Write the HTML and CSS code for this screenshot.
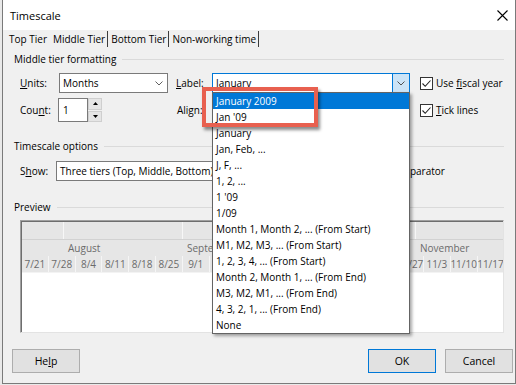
FILE: index.html
```html
<!DOCTYPE html>
<html>
<head>
<meta charset="utf-8">
<link rel="stylesheet" href="styles.css">
</head>
<body>
<div class="dialog">
  <div class="titlebar">
    <span class="title">Timescale</span>
    <svg class="close" width="11" height="11" viewBox="0 0 11 11"><path d="M0.5 0.5 L10.5 10.5 M10.5 0.5 L0.5 10.5" stroke="#000" stroke-width="1.1" fill="none"/></svg>
  </div>
  <div class="tabs">
    <div class="tab first">Top Tier</div>
    <div class="tab active">Middle Tier</div>
    <div class="tab">Bottom Tier</div>
    <div class="tab">Non-working time</div>
  </div>
  <div class="content">
    <div class="group-head"><span>Middle tier formatting</span><i class="rule"></i></div>
    <div class="row r1">
      <span class="lbl w-units"><u>U</u>nits:</span>
      <div class="combo units"><span>Months</span><svg class="chev" width="8" height="5" viewBox="0 0 8 5"><path d="M0.5 0.5 L4 4 L7.5 0.5" stroke="#606060" fill="none"/></svg></div>
      <span class="lbl w-label"><u>L</u>abel:</span>
      <div class="combo wide focus"><span>January</span><div class="dd-btn"><svg width="8" height="5" viewBox="0 0 8 5"><path d="M0.5 0.5 L4 4 L7.5 0.5" stroke="#505050" fill="none"/></svg></div></div>
      <div class="check"><span class="box"><svg width="11" height="11" viewBox="0 0 11 11"><path d="M1.5 5.5 L4.2 8.3 L9.5 2.5" stroke="#222" stroke-width="1.1" fill="none"/></svg></span><span>Use <u>f</u>iscal year</span></div>
    </div>
    <div class="row r2">
      <span class="lbl w-count">Cou<u>n</u>t:</span>
      <div class="spin-input">1</div>
      <div class="spin-btns">
        <div class="sb"><svg width="5" height="3" viewBox="0 0 5 3"><path d="M0 3 L2.5 0 L5 3 Z" fill="#000"/></svg></div>
        <div class="sb"><svg width="5" height="3" viewBox="0 0 5 3"><path d="M0 0 L2.5 3 L5 0 Z" fill="#000"/></svg></div>
      </div>
      <span class="lbl w-align">Align:</span>
      <div class="combo wide"></div>
      <div class="check"><span class="box"><svg width="11" height="11" viewBox="0 0 11 11"><path d="M1.5 5.5 L4.2 8.3 L9.5 2.5" stroke="#222" stroke-width="1.1" fill="none"/></svg></span><span><u>T</u>ick lines</span></div>
    </div>
    <div class="group-head gh2"><span>Timescale options</span><i class="rule"></i></div>
    <div class="row r3">
      <span class="lbl w-show">S<u>h</u>ow:</span>
      <div class="combo show"><span>Three tiers (Top, Middle, Bottom)</span></div>
      <span class="lbl size-lbl"></span>
      <div class="num"></div>
      <span class="pct"></span>
      <div class="check sep"><span class="box"><svg width="11" height="11" viewBox="0 0 11 11"><path d="M1.5 5.5 L4.2 8.3 L9.5 2.5" stroke="#222" stroke-width="1.1" fill="none"/></svg></span><span>Scale separator</span></div>
    </div>
    <div class="group-head gh3"><span>Preview</span><i class="rule"></i></div>
    <div class="preview">
      <div class="pv-inner">
        <div class="pv-row top">
          <div class="seg" style="width:41px"></div>
          <div class="seg" style="width:119px"></div>
          <div class="seg" style="width:115px"></div>
          <div class="seg" style="width:118px"></div>
          <div class="seg" style="width:87px"></div>
        </div>
        <div class="pv-row mid">
          <div class="seg" style="width:41px"></div>
          <div class="seg" style="width:119px">August</div>
          <div class="seg" style="width:115px">September</div>
          <div class="seg" style="width:118px"></div>
          <div class="seg" style="width:87px">November</div>
        </div>
        <div class="pv-row dates">
          <div class="cell">7/21</div><div class="cell">7/28</div><div class="cell">8/4</div><div class="cell">8/11</div><div class="cell">8/18</div><div class="cell">8/25</div><div class="cell">9/1</div><div class="cell"></div><div class="cell"></div><div class="cell"></div><div class="cell"></div><div class="cell"></div><div class="cell"></div><div class="cell"></div><div class="cell">10/27</div><div class="cell">11/3</div><div class="cell">11/10</div><div class="cell">11/17</div>
        </div>
      </div>
    </div>
    <div class="buttons">
      <div class="btn">He<u>l</u>p</div>
      <div class="spacer"></div>
      <div class="btn default">OK</div>
      <div class="btn">Cancel</div>
    </div>
  </div>

  <div class="dropdown">
    <div class="item sel">January 2009</div>
    <div class="item">Jan '09</div>
    <div class="item">January</div>
    <div class="item">Jan, Feb, ...</div>
    <div class="item">J, F, ...</div>
    <div class="item">1, 2, ...</div>
    <div class="item">1 '09</div>
    <div class="item">1/09</div>
    <div class="item">Month 1, Month 2, ... (From Start)</div>
    <div class="item">M1, M2, M3, ... (From Start)</div>
    <div class="item">1, 2, 3, 4, ... (From Start)</div>
    <div class="item">Month 2, Month 1, ... (From End)</div>
    <div class="item">M3, M2, M1, ... (From End)</div>
    <div class="item">4, 3, 2, 1, ... (From End)</div>
    <div class="item">None</div>
  </div>
  <div class="callout"></div>
</div>
</body>
</html>
```

FILE: styles.css
```css
* { box-sizing: border-box; }

body {
  margin: 0;
  background: #e9e9e9;
  font-family: "Open Sans", "Noto Sans", sans-serif;
  font-size: 10px;
  color: #000;
}

u { text-decoration: underline; text-underline-offset: 1px; }

.dialog {
  position: relative;
  margin-left: 2px;
  width: 514px;
  height: 384px;
  background: #f0f0f0;
  border: 1px solid #7a7a7a;
  border-top: none;
  display: flex;
  flex-direction: column;
}

.titlebar {
  height: 30px;
  flex: none;
  background: #fff;
  display: flex;
  align-items: center;
  justify-content: space-between;
  padding: 0 7px;
  font-size: 11px;
}

.close { display: block; }

.tabs {
  height: 18px;
  flex: none;
  display: flex;
  align-items: center;
  padding-left: 3px;
}

.tab {
  padding: 0 2px 0 3px;
  line-height: 16px;
  border-right: 1px solid #3c3c3c;
  white-space: nowrap;
}
.tab.first { border-right-color: transparent; }

.content {
  flex: 1;
  display: flex;
  flex-direction: column;
  padding: 4px 2px 0 9px;
}

.group-head {
  display: flex;
  align-items: center;
  height: 14px;
  margin: 0 9px 0 2px;
  gap: 6px;
  white-space: nowrap;
}
.group-head .rule { flex: 1; height: 1px; background: #dadada; }
.gh2 { margin-top: 17px; }
.gh3 { margin-top: 19px; }

.row { display: flex; align-items: center; margin-left: 8px; }
.r1 { margin-top: 7px; height: 20px; }
.r2 { margin-top: 5px; height: 24px; }
.r3 { margin-top: 8px; height: 20px; }

.lbl { white-space: nowrap; flex: none; }
.w-units { width: 39px; }
.w-label { width: 36px; margin-left: 8px; }
.w-count { width: 38px; }
.w-align { width: 35px; margin-left: 75px; }
.w-show { width: 36px; }
.size-lbl { width: 26px; margin-left: 10px; }

.combo {
  height: 20px;
  background: #fff;
  border: 1px solid #7a7a7a;
  display: flex;
  align-items: center;
  padding-left: 3px;
  flex: none;
  white-space: nowrap;
  overflow: hidden;
}
.combo > span { flex: 1; }
.units { width: 109px; padding-right: 4px; }
.wide { width: 198px; }
.show { width: 210px; }
.focus { border-color: #0078d7; }
.chev { display: block; }

.dd-btn {
  width: 17px;
  height: 18px;
  background: #cce4f7;
  border-left: 1px solid #0078d7;
  display: flex;
  align-items: center;
  justify-content: center;
}

.check {
  display: flex;
  align-items: center;
  gap: 3px;
  margin-left: 10px;
  white-space: nowrap;
}
.box {
  width: 13px;
  height: 13px;
  background: #fff;
  border: 1px solid #333;
  display: flex;
  align-items: center;
  justify-content: center;
}
.sep { margin-left: 8px; }

.spin-input {
  width: 30px;
  height: 24px;
  background: #fff;
  border: 1px solid #7a7a7a;
  padding-left: 4px;
  display: flex;
  align-items: center;
}
.spin-btns {
  width: 14px;
  height: 24px;
  display: flex;
  flex-direction: column;
  gap: 1px;
}
.sb {
  flex: 1;
  background: #e5e5e5;
  border: 1px solid #cfcfcf;
  display: flex;
  align-items: center;
  justify-content: center;
}

.num {
  width: 36px;
  height: 20px;
  background: #fff;
  border: 1px solid #7a7a7a;
  padding-left: 3px;
  display: flex;
  align-items: center;
}
.pct { margin-left: 3px; width: 8px; }

.preview {
  margin: 6px 0 0 8px;
  width: 484px;
  height: 113px;
  border: 1px solid;
  border-color: #a0a0a0 #e3e3e3 #e3e3e3 #a0a0a0;
  background: #fff;
  flex: none;
}
.pv-inner {
  height: 100%;
  border-top: 1px solid #6e6e6e;
  border-left: 1px solid #6e6e6e;
  overflow: hidden;
  color: #6b6b6b;
}
.pv-row { display: flex; background: #e6e6e6; white-space: nowrap; }
.pv-row.top { height: 18px; border-bottom: 1px solid #d2d2d2; }
.pv-row.mid { height: 16px; line-height: 16px; }
.pv-row.dates { height: 17px; line-height: 17px; border-bottom: 1px solid #f3f3f3; }
.seg { flex: none; padding-left: 4px; border-left: 1px solid #f7f7f7; overflow: hidden; }
.seg:first-child { border-left: none; }
.mid .seg { border-left-color: transparent; }
.cell {
  flex: none;
  width: 26.8px;
  text-align: center;
  border-right: 1px solid #f5f5f5;
  display: flex;
  justify-content: center;
  overflow: visible;
}

.buttons { margin-top: 16px; display: flex; height: 24px; margin-left: 0; }
.spacer { flex: 1; }
.btn {
  width: 68px;
  height: 24px;
  background: #e1e1e1;
  border: 1px solid #adadad;
  display: flex;
  align-items: center;
  justify-content: center;
  font-size: 10.5px;
}
.btn.default { border-color: #0078d7; margin-right: 9px; }

.dropdown {
  position: absolute;
  left: 209px;
  top: 92px;
  width: 198px;
  height: 242px;
  background: #fff;
  border: 1px solid #646464;
  box-shadow: 2px 2px 3px rgba(0, 0, 0, 0.35);
}
.item {
  height: 16px;
  line-height: 16px;
  padding-left: 3px;
  white-space: nowrap;
}
.item.sel { background: #0078d7; color: #fff; }

.callout {
  position: absolute;
  left: 199px;
  top: 87px;
  width: 116px;
  height: 40px;
  border: 4px solid #e8604f;
  box-shadow: 2px 3px 3px rgba(0, 0, 0, 0.45);
}
```
